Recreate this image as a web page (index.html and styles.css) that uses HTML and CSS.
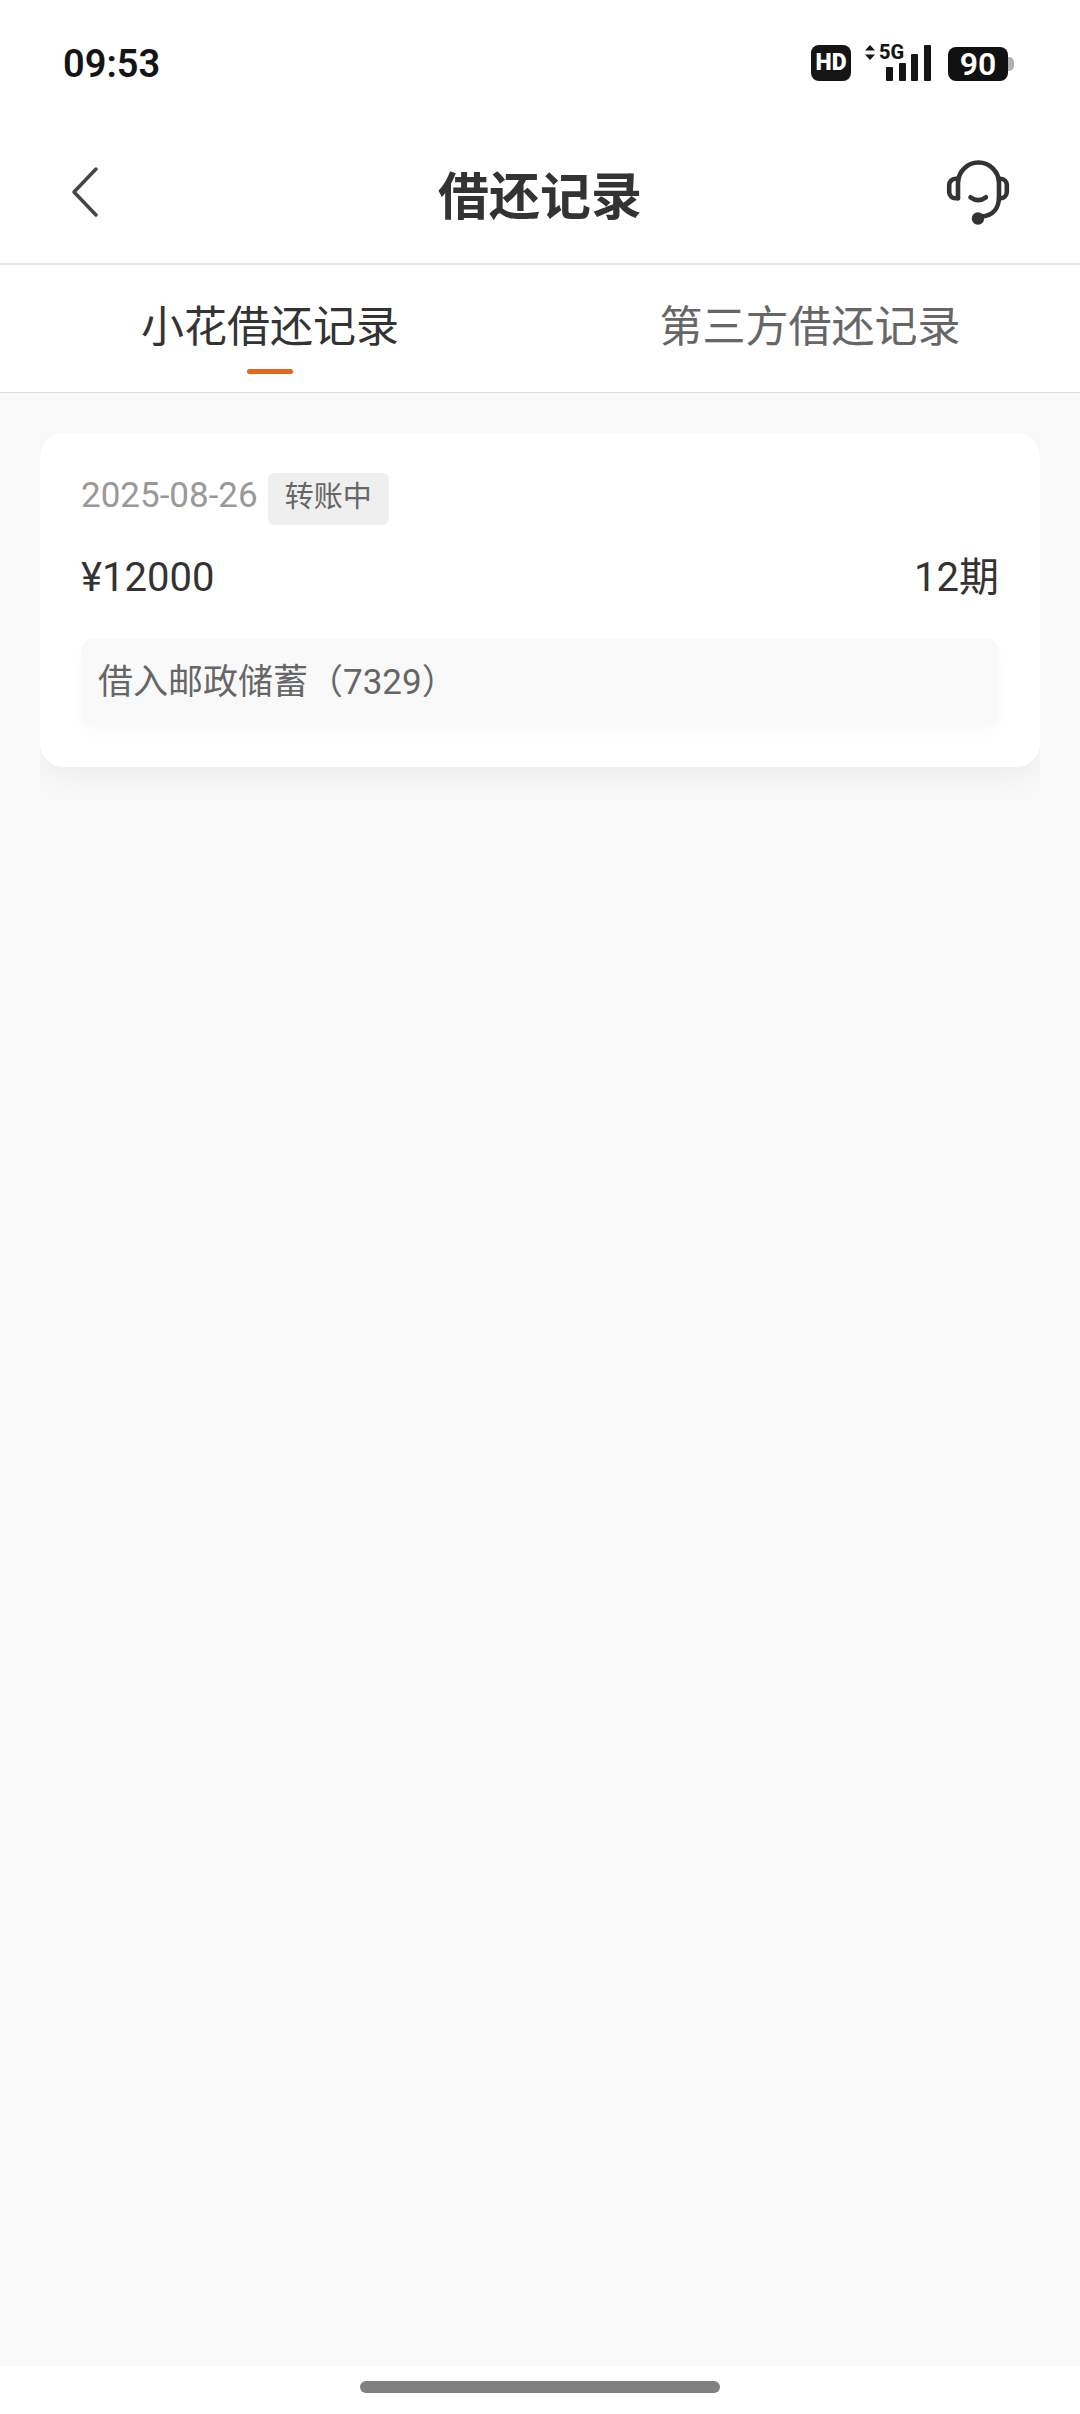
FILE: index.html
```
<!DOCTYPE html>
<html lang="zh-CN">
<head>
  <meta charset="UTF-8">
  <meta name="viewport" content="width=device-width, initial-scale=1.0">
  <title>借还记录</title>
  <link rel="stylesheet" href="styles.css">
</head>
<body>
  <div class="status-bar">
    <span class="time">09:53</span>
    <div class="status-icons">
      <span class="hd">HD</span>
      <svg class="signal" width="68" height="40" viewBox="0 0 68 40">
        <path d="M2 9.5L7 4l5 5.500zM2 13.500h10L7 19z"/>
        <text x="16" y="18">5G</text>
        <rect x="23" y="26" width="7" height="14" rx="1"/>
        <rect x="36" y="22" width="7" height="18" rx="1"/>
        <rect x="48" y="13" width="7" height="27" rx="1"/>
        <rect x="61" y="4" width="7" height="36" rx="1"/>
      </svg>
      <div class="battery"><span class="level">90</span></div>
    </div>
  </div>

  <header class="header">
    <button class="icon-btn" type="button" aria-label="返回">
      <svg width="34" height="52" viewBox="0 0 34 52">
        <path d="M28 3L6 26L28 49" fill="none" stroke="#444" stroke-width="3.500" stroke-linecap="round" stroke-linejoin="round"/>
      </svg>
    </button>
    <h1>借还记录</h1>
    <button class="icon-btn" type="button" aria-label="客服">
      <svg width="68" height="68" viewBox="0 0 68 68">
        <g fill="none" stroke="#333" stroke-width="4.600" stroke-linecap="round">
          <path d="M14 40.200V25a20.500 20.500 0 0 1 41 0v14c0 11-6 18.500-17 19.500"/>
          <path d="M14 20.800h-2.500a6.300 6.300 0 0 0-6.300 6.300v6.800a6.300 6.300 0 0 0 6.300 6.300H14"/>
          <path d="M55 20.800h1.500a6.300 6.300 0 0 1 6.300 6.300v6.800a6.300 6.300 0 0 1-6.300 6.300H55"/>
          <path d="M26.500 39.300q7.700 5.600 15.400 0"/>
        </g>
        <circle cx="34" cy="60.500" r="6.200" fill="#333"/>
      </svg>
    </button>
  </header>

  <nav class="tabs">
    <a class="tab active" href="#own">小花借还记录</a>
    <a class="tab" href="#third">第三方借还记录</a>
  </nav>

  <main class="content">
    <div class="card-wrap">
      <div class="card" id="own">
        <div class="card-top">
          <span class="date">2025-08-26</span>
          <span class="tag">转账中</span>
        </div>
        <div class="card-amount">
          <span>¥12000</span>
          <span>12期</span>
        </div>
        <p class="note">借入邮政储蓄（7329）</p>
      </div>
    </div>
  </main>

  <div class="home-bar"><i></i></div>
</body>
</html>
```
FILE: styles.css
```
* { margin: 0; padding: 0; box-sizing: border-box; }
body { min-height: 100vh; display: flex; flex-direction: column; background: #fff; color: #333; font-family: Roboto, "Noto Sans CJK SC", sans-serif; }

/* 状态栏 */
.status-bar { height: 120px; padding: 8px 66px 0 63px; display: flex; justify-content: space-between; align-items: center; color: #151515; }
.time { font-size: 38px; font-weight: 600; }
.status-icons { display: flex; align-items: flex-end; gap: 12px; padding-bottom: 6px; }
.hd { width: 40px; height: 36px; border-radius: 8px; background: #151515; color: #fff; font-size: 23px; font-weight: 900; line-height: 36px; text-align: center; }
.signal { fill: #151515; margin-right: 5px; }
.signal text { font-size: 20px; font-weight: 800; }
.battery { display: flex; align-items: center; }
.battery:after { content: ""; width: 6px; height: 14px; border-radius: 0 5px 5px 0; background: #b0b0b0; }
.level { width: 60px; height: 34px; border-radius: 8px; background: #111; color: #fff; font-size: 32px; font-weight: 600; line-height: 34px; text-align: center; }

/* 标题栏 */
.header { height: 145px; padding: 0 68px; display: flex; justify-content: space-between; align-items: center; border-bottom: 2px solid #e8e8e8; }
.header h1 { padding-top: 12px; font-size: 51px; font-weight: 700; line-height: 60px; }
.icon-btn { width: 68px; height: 68px; border: 0; background: none; display: flex; align-items: center; }

/* 选项卡 */
.tabs { height: 128px; display: flex; border-bottom: 1px solid #ddd; }
.tab { flex: 1; padding-top: 32px; display: flex; flex-direction: column; align-items: center; color: #666; font-size: 43px; line-height: 60px; text-decoration: none; }
.tab.active { color: #333; }
.tab.active:after { content: ""; width: 46px; height: 5px; margin-top: 12px; border-radius: 3px; background: #e5651a; }

.content { flex: 1; padding: 40px; background: #f9f9f9; }

/* 记录卡片 */
.card-wrap { padding-bottom: 40px; overflow: hidden; }
.card { padding: 40px 41px; border-radius: 24px; background: #fff; box-shadow: 0 10px 30px rgba(0, 0, 0, .05); }
.card-top { display: flex; gap: 10px; line-height: 46px; }
.date { color: #999; font-size: 35px; }
.tag { padding: 1px 17px 5px; border-radius: 6px; background: #efefef; color: #666; font-size: 29px; }
.card-amount { margin: 23px 0 31px; display: flex; justify-content: space-between; font-size: 40px; line-height: 60px; }
.note { padding: 19px 17px; border-radius: 12px; background: #f9f9f9; box-shadow: 0 6px 16px rgba(0, 0, 0, .02); color: #666; font-size: 35px; line-height: 50px; }

.home-bar { height: 48px; padding-top: 15px; display: flex; justify-content: center; }
.home-bar i { width: 33.3333%; height: 12px; border-radius: 6px; background: #808080; }
```
